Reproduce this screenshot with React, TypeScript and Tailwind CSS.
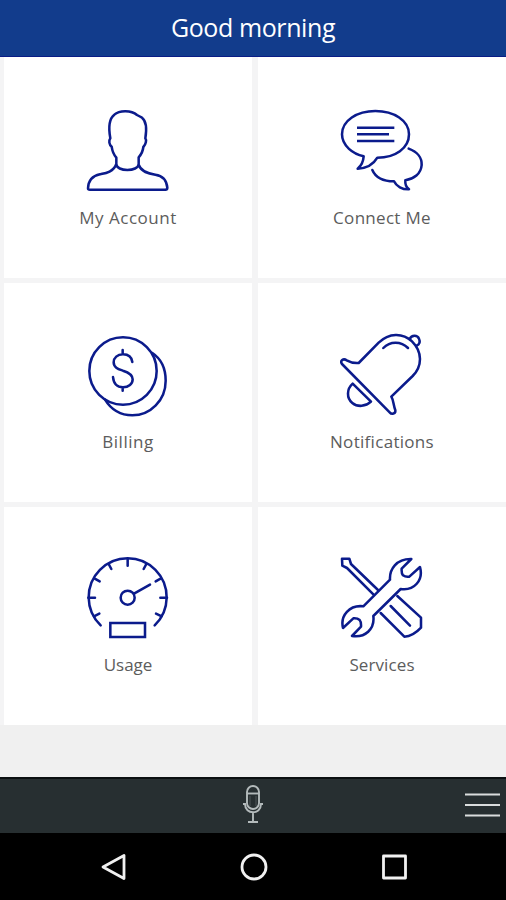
import type { ReactNode } from 'react'

type TileProps = {
  label: string
  viewBox: string
  className: string
  children: ReactNode
}

function Tile({ label, viewBox, className, children }: TileProps) {
  return (
    <button type="button" className={`flex flex-col items-center justify-start bg-white text-[17px] text-[#5c5c5c] ${className}`}>
      <svg viewBox={viewBox} className="h-[84px] w-[84px]" fill="none" stroke="#0b1b8c" strokeWidth="7.6" strokeLinecap="round" strokeLinejoin="round">
        {children}
      </svg>
      <span className="mt-[13px] h-6 leading-6 whitespace-nowrap">{label}</span>
    </button>
  )
}

export default function App() {
  return (
    <div className="flex h-[900px] w-[506px] flex-col overflow-hidden bg-[#f0f0f0] font-['Open_Sans','Noto_Sans',sans-serif]">
      <header className="flex h-[57px] shrink-0 items-center justify-center border-b border-[#0a1c86] bg-[#123c8c] pb-0.5">
        <h1 className="text-[25px] leading-8 font-medium tracking-[-0.4px] text-white">Good morning</h1>
      </header>

      <main className="grid shrink-0 grid-cols-[248px_248px] grid-rows-[221px_219px_218px] gap-x-1.5 gap-y-[5px] bg-[#f4f4f5] pl-1">
        <Tile label="My Account" viewBox="48 42 252 252" className="pt-[52px] tracking-[0.5px]">
          <path d="M139 207C139 231 205 231 206 207L206 187C214 178 219 166 220 156C228 148 230 135 226 130C230 105 232 80 216 68Q208 64 201 60C184 45 148 45 133 59C116 72 115 97 121 130C116 137 117 149 125 155C127 170 132 180 139 188V207C130 232 105 235 90 238C66 243 55 260 54 280Q54 284 60 284H286Q292 284 292 278C290 258 279 242 256 239C236 236 213 231 206 209" />
        </Tile>
        <Tile label="Connect Me" viewBox="45 42 252 252" className="pt-[52px] tracking-[0.3px]">
          <path d="M116 184C85 177 51 153 51 118C51 77 96 48 151 48C207 48 252 77 252 118C252 160 211 188 157 188C146 207 124 220 98 221C110 211 115 199 116 184Z" />
          <path d="M251 161C278 171 291 190 290 210C288 237 266 252 241 256C240 267 244 277 252 283C232 284 214 274 207 259C175 259 152 248 142 225" />
          <path d="M96 98H208M96 118H192M96 138H208" strokeLinecap="butt" />
        </Tile>
        <Tile label="Billing" viewBox="48 24 252 252" className="pt-[50px] tracking-[0.5px]">
          <circle cx="159" cy="138" r="101" />
          <path d="M247 84C277 104 287 133 287 167C287 226 241 271 187 271C152 271 123 253 105 224" />
          <path d="M187 111C185 97 175 88 159 88C142 88 131 98 131 112C131 128 145 132 159 137C175 142 188 149 188 163C188 177 176 187 159 187C141 187 131 177 129 156M158 75V88M158 187V197" />
        </Tile>
        <Tile label="Notifications" viewBox="60 24 252 252" className="pt-[50px] tracking-[0.3px]">
          <path d="M66 117C59 107 70 99 80 106C93 113 105 115 116 114L176 53C207 23 248 23 276 49C307 80 308 122 278 153L214 215C221 226 220 241 226 256C227 267 215 269 209 262Z" />
          <path d="M190 69C210 48 243 48 264 69M269 42C275 29 292 29 297 41C301 50 298 58 290 62M98 176C80 192 79 219 97 234C113 247 137 245 153 230Z" />
        </Tile>
        <Tile label="Usage" viewBox="48 33 252 252" className="pt-[49px]">
          <path d="M92 241A117 117 0 1 1 254 241" />
          <path d="M173 42V62M116 57L124 72M73 100L89 109M55 158H75M72 214L88 206M229 57L221 72M273 100L257 109M291 158H271M275 214L258 206M192 146L240 119" />
          <circle cx="173" cy="158" r="21" />
          <path d="M121 234H225V276H121Z" strokeLinejoin="miter" />
        </Tile>
        <Tile label="Services" viewBox="45 33 252 252" className="pt-[49px] tracking-[0.1px]">
          <path d="M115 184L195 104C193 73 214 41 259 42L230 71Q229 85 234 91Q242 97 253 95L285 66C296 106 267 138 227 132L145 213C150 253 120 279 81 273L108 245Q109 231 104 225Q97 219 85 220L54 249C45 211 74 179 115 184Z" />
          <path d="M145 148L66 69L52 62L51 41L73 41L78 57L159 135M217 153L288 218V248Q264 274 238 275L167 204M197 183L255 242" />
        </Tile>
      </main>

      <footer className="mt-auto shrink-0">
        <div className="grid h-14 grid-cols-3 items-center border-t-2 border-[#0c1012] bg-[#272f31]">
          <button type="button" aria-label="Voice search" className="col-start-2 mb-[5px] flex justify-center pl-px">
            <svg viewBox="0 0 22 40" className="h-10 w-[22px]" fill="none" stroke="#b3babb" strokeWidth="1.9">
              <rect x="5" y="2" width="12" height="23" rx="6" />
              <path d="M5 9.5H17" />
              <path d="M8 12V22M14 12V22" strokeWidth="0.7" opacity="0.4" />
              <path d="M1 20H3C3 31 19 31 19 20H21M11 28V37.5M6 38H16" />
            </svg>
          </button>
          <button type="button" aria-label="Menu" className="mr-[5px] mb-[3px] justify-self-end">
            <svg viewBox="0 0 36 28" className="h-7 w-9" stroke="#dadddd" strokeWidth="2.2">
              <path d="M0 3.5H35M0 14H35M0 24.5H35" />
            </svg>
          </button>
        </div>
        <nav className="flex h-[67px] items-center justify-center gap-28 bg-black pl-px">
          <svg viewBox="0 0 28 28" className="h-7 w-7" fill="none" stroke="#f1f1f1" strokeWidth="2.8" strokeLinejoin="round">
            <path d="M24 2.5V25.5L3 14Z" />
          </svg>
          <svg viewBox="0 0 28 28" className="h-7 w-7" fill="none" stroke="#f1f1f1" strokeWidth="2.8">
            <circle cx="14" cy="14" r="12" />
          </svg>
          <svg viewBox="0 0 28 28" className="h-7 w-7" fill="none" stroke="#f1f1f1" strokeWidth="2.8" strokeLinejoin="round">
            <rect x="3.5" y="3" width="22" height="22" />
          </svg>
        </nav>
      </footer>
    </div>
  )
}
